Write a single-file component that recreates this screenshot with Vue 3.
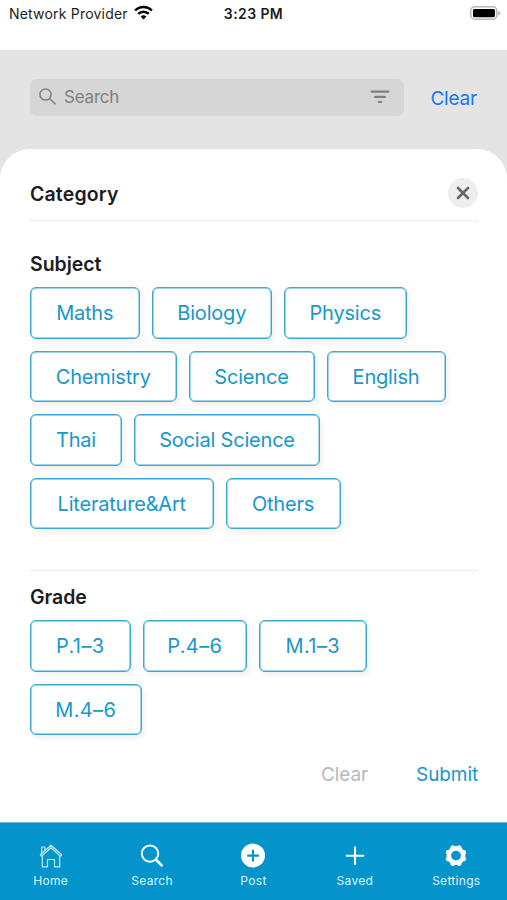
<script setup>
import { ref } from 'vue'

const sections = [
  {
    title: 'Subject',
    type: 'words',
    items: [
      { label: 'Maths', width: 109.5 },
      { label: 'Biology', width: 120.5 },
      { label: 'Physics', width: 122.5 },
      { label: 'Chemistry', width: 146.5 },
      { label: 'Science', width: 126 },
      { label: 'English', width: 119 },
      { label: 'Thai', width: 92 },
      { label: 'Social Science', width: 186 },
      { label: 'Literature&Art', width: 183.5 },
      { label: 'Others', width: 115 }
    ]
  },
  {
    title: 'Grade',
    type: 'levels',
    items: [
      { label: 'P.1–3', width: 100.5 },
      { label: 'P.4–6', width: 104.5 },
      { label: 'M.1–3', width: 107.5 },
      { label: 'M.4–6', width: 111.5 }
    ]
  }
]

const tabs = ['Home', 'Search', 'Post', 'Saved', 'Settings']

const search = ref('')
</script>

<template>
  <div class="screen">
    <header class="status-bar">
      <div class="carrier">
        <span>Network Provider</span>
        <svg class="wifi" viewBox="0 0 18 14" fill="none" stroke="#000" stroke-width="2.3">
          <path d="M1 5.1a11.4 11.4 0 0 1 16 0" />
          <path d="M4 8.4a7.1 7.1 0 0 1 10 0" />
          <path d="M9 13.6 6.3 10.8a3.9 3.9 0 0 1 5.4 0z" fill="#000" stroke="none" />
        </svg>
      </div>
      <span class="time">3:23 PM</span>
      <svg class="battery" viewBox="0 0 31 14">
        <rect x=".8" y=".8" width="26" height="12.4" rx="3.8" fill="#fff" stroke="#b9b9b9" stroke-width="1.5" />
        <rect x="3" y="2.9" width="21.9" height="8.4" rx="1.4" />
        <path d="M28.3 4.9c2.4.9 2.4 3.5 0 4.4z" fill="#aaa" />
      </svg>
    </header>

    <main class="content">
      <div class="search-row">
        <label class="search-box">
          <svg class="search-icon" viewBox="0 0 17 17" fill="none" stroke="#7f7f81" stroke-width="1.5" stroke-linecap="round">
            <circle cx="6.5" cy="6.5" r="5.6" />
            <path d="M10.7 10.7 16 15.8" />
          </svg>
          <input v-model="search" placeholder="Search" />
          <svg class="filter-icon" viewBox="0 0 20 14" fill="none" stroke="#7f7f81" stroke-width="2.2" stroke-linecap="round">
            <path d="M1.6 1.6h16.8M5 6.8h10M8.8 12h2.4" />
          </svg>
        </label>
        <button class="clear-search">Clear</button>
      </div>

      <div class="sheet">
        <div class="sheet-header">
          <h2>Category</h2>
          <button class="close">
            <svg viewBox="0 0 14 14" stroke="#66666a" stroke-width="2.6" stroke-linecap="round">
              <path d="M2 2l10 10M12 2 2 12" />
            </svg>
          </button>
        </div>

        <section v-for="section in sections" :key="section.title" class="section">
          <h2>{{ section.title }}</h2>
          <div :class="['chips', section.type]">
            <button
              v-for="item in section.items"
              :key="item.label"
              class="chip"
              :style="{ width: item.width + 'px' }"
            >
              {{ item.label }}
            </button>
          </div>
        </section>

        <div class="actions">
          <button class="reset">Clear</button>
          <button class="submit">Submit</button>
        </div>
      </div>
    </main>

    <nav class="tab-bar">
      <a v-for="tab in tabs" :key="tab" class="tab">
        <svg v-if="tab === 'Home'" viewBox="0 0 24 24" fill="none" stroke="#c4ebf8" stroke-width="1.2" stroke-linejoin="round">
          <path d="M1.3 10.8 12 1.2l10.7 9.6-1.2 1.4L12 3.7l-9.5 8.5z" />
          <path d="M2.7 9.3V3h3.2v3.5" />
          <path d="M3.3 11.7v11.1h5.2v-7.3h7v7.3h5.2V11.7" />
        </svg>
        <svg v-else-if="tab === 'Search'" viewBox="0 0 24 24" fill="none" stroke="#fff" stroke-width="2">
          <circle cx="10" cy="9.6" r="8.2" />
          <path d="m15.8 15.5 6.6 6.6" stroke-width="2.6" />
        </svg>
        <svg v-else-if="tab === 'Post'" viewBox="0 0 24 24">
          <circle cx="12" cy="11.6" r="12" fill="#fff" />
          <path d="M12 5.8v11.6M6.2 11.6h11.6" stroke="#0294ca" stroke-width="2.1" />
        </svg>
        <svg v-else-if="tab === 'Saved'" viewBox="0 0 24 24" stroke="#fff" stroke-width="2.1" stroke-linecap="round">
          <path d="M12 3.4v16.6M3.7 11.7h16.6" />
        </svg>
        <svg v-else viewBox="0 0 24 24">
          <circle cx="12" cy="11.6" r="7.2" fill="none" stroke="#fff" stroke-width="4.6" />
          <g stroke="#fff" stroke-width="4.6" stroke-linecap="round">
            <path
              v-for="n in 8"
              :key="n"
              d="M12 3.8V3"
              :transform="`rotate(${n * 45 + 22.5} 12 11.6)`"
            />
          </g>
        </svg>
        <span>{{ tab }}</span>
      </a>
    </nav>
  </div>
</template>

<style>
body {
  margin: 0;
}
</style>

<style scoped>
.screen {
  display: flex;
  flex-direction: column;
  width: 507px;
  height: 900px;
  overflow: hidden;
  background: #fff;
  color: #1c1c1e;
  font-family: Inter, "Liberation Sans", sans-serif;
}

button,
input {
  padding: 0;
  border: 0;
  background: none;
  font: inherit;
  letter-spacing: inherit;
}

h2 {
  margin: 0;
  padding-top: 1px;
  font-size: 19.5px;
  font-weight: 600;
  line-height: 24px;
  letter-spacing: -0.05px;
}

.status-bar {
  display: grid;
  grid-template-columns: 1fr auto 1fr;
  box-sizing: border-box;
  height: 50px;
  padding: 4px 6px 0 9px;
  font-size: 14px;
  line-height: 20px;
}

.carrier {
  display: flex;
  gap: 6px;
  letter-spacing: 0.2px;
}

.wifi {
  width: 19px;
  height: 15px;
  margin-top: 1px;
}

.time {
  margin-right: 3px;
  font-weight: 600;
  letter-spacing: 0.4px;
}

.battery {
  justify-self: end;
  width: 31px;
  height: 14px;
  margin-top: 2px;
}

.content {
  flex: 1;
  display: flex;
  flex-direction: column;
  background: #e4e4e4;
}

.search-row {
  display: flex;
  align-items: center;
  height: 37px;
  padding: 29px 30px 33px;
}

.search-box {
  display: flex;
  align-items: center;
  box-sizing: border-box;
  width: 374px;
  height: 37px;
  padding: 0 14px 2px 9px;
  border-radius: 7px;
  background: #d6d6d6;
}

.search-icon {
  width: 17px;
  height: 17px;
}

.search-box input {
  flex: 1;
  min-width: 0;
  margin-left: 8px;
  font-size: 17px;
  letter-spacing: -0.2px;
  outline: none;
}

.search-box input::placeholder {
  color: #7f7f81;
}

.filter-icon {
  width: 20px;
  height: 14px;
  margin-top: 1px;
}

.clear-search {
  margin-left: auto;
  padding-top: 2px;
  color: #1677ee;
  font-size: 19px;
  letter-spacing: -0.2px;
}

.sheet {
  flex: 1;
  padding: 0 29px 0 30px;
  border-radius: 30px 30px 0 0;
  background: #fff;
}

.sheet-header {
  display: flex;
  align-items: center;
  justify-content: space-between;
  box-sizing: border-box;
  height: 72px;
  padding-top: 17px;
  border-bottom: 1px solid #eee;
}

.sheet-header h2 {
  letter-spacing: 0.15px;
}

.close {
  display: grid;
  place-items: center;
  width: 30px;
  height: 30px;
  border-radius: 50%;
  background: #eeeef0;
}

.close svg {
  width: 14px;
  height: 14px;
}

.section {
  padding-top: 30px;
}

.section + .section {
  margin-top: 41px;
  padding-top: 13px;
  border-top: 1px solid #eee;
}

.chips {
  display: flex;
  flex-wrap: wrap;
  gap: 12px;
  margin-top: 11px;
}

.words {
  letter-spacing: -0.2px;
}

.levels {
  letter-spacing: 0.4px;
}

.chip {
  box-sizing: border-box;
  height: 51.5px;
  padding-top: 1px;
  border: 1px solid #3ba9d3;
  border-radius: 6px;
  background: #fff;
  box-shadow: inset 0 0 0 0.5px #3ba9d3, 3px 4px 5px rgba(0, 0, 0, 0.05);
  color: #1897c9;
  font-size: 20px;
  white-space: nowrap;
}

.actions {
  display: flex;
  justify-content: flex-end;
  gap: 48px;
  margin-top: 28px;
  font-size: 19px;
  line-height: 24px;
  letter-spacing: -0.1px;
}

.reset {
  color: #b6b9bb;
}

.submit {
  color: #1897c9;
}

.tab-bar {
  display: grid;
  grid-template-columns: repeat(5, 1fr);
  box-sizing: border-box;
  height: 78px;
  padding-top: 21px;
  border-top: 1px solid #67bedf;
  background: #0294ca;
}

.tab {
  display: flex;
  flex-direction: column;
  align-items: center;
  gap: 5px;
  color: #e0f5fc;
  font-size: 12px;
  line-height: 16px;
  letter-spacing: 0.3px;
}

.tab svg {
  width: 24px;
  height: 24px;
  overflow: visible;
}
</style>
